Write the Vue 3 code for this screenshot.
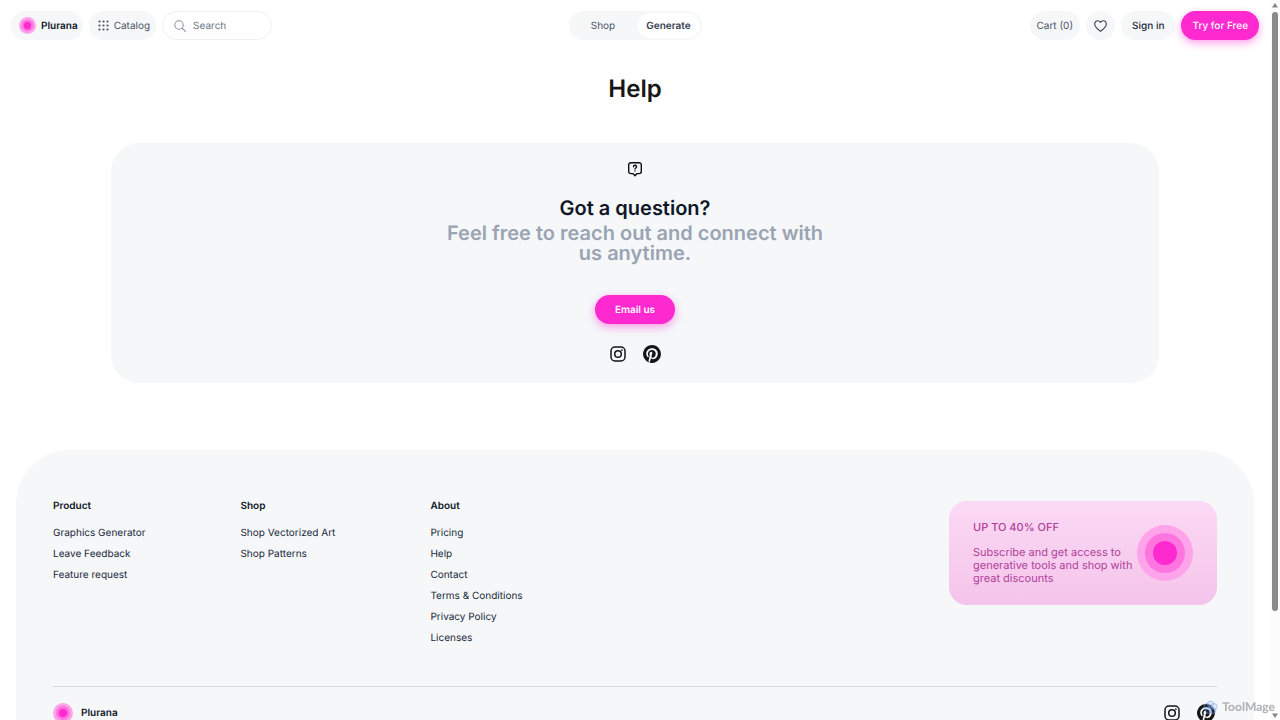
<script setup>
import { ref } from 'vue'

const query = ref('')
const mode = ref('Generate')
const modes = ['Shop', 'Generate']

const columns = [
  { title: 'Product', links: ['Graphics Generator', 'Leave Feedback', 'Feature request'] },
  { title: 'Shop', links: ['Shop Vectorized Art', 'Shop Patterns'] },
  {
    title: 'About',
    links: ['Pricing', 'Help', 'Contact', 'Terms & Conditions', 'Privacy Policy', 'Licenses']
  }
]

const pinterest =
  'M12 0a12 12 0 0 0-4.37 23.17c-.1-.95-.2-2.4.04-3.44l1.41-5.96s-.36-.72-.36-1.78c0-1.67.97-2.91 2.17-2.91 1.02 0 1.52.77 1.52 1.69 0 1.03-.66 2.57-1 4-.28 1.19.6 2.17 1.78 2.17 2.13 0 3.77-2.25 3.77-5.5 0-2.87-2.06-4.88-5.01-4.88-3.42 0-5.42 2.56-5.42 5.21 0 1.03.4 2.14.89 2.74.1.12.11.22.08.34l-.33 1.36c-.05.22-.17.27-.4.16-1.5-.7-2.43-2.88-2.43-4.64 0-3.78 2.75-7.25 7.92-7.25 4.16 0 7.39 2.96 7.39 6.92 0 4.13-2.6 7.46-6.22 7.46-1.21 0-2.35-.63-2.74-1.38l-.75 2.85c-.27 1.04-1 2.35-1.49 3.15A12 12 0 1 0 12 0z'
</script>

<template>
  <div class="shell">
    <div class="page">
      <header class="topbar">
        <div class="group">
          <a class="pill brand" href="#">
            <svg class="brand-dot" viewBox="0 0 56 56" aria-hidden="true">
              <circle cx="28" cy="28" r="28" fill="#ffa3ea" />
              <circle cx="28" cy="28" r="20" fill="#ff75df" />
              <circle cx="28" cy="28" r="12" fill="#ff29d0" />
            </svg>
            Plurana
          </a>
          <button class="pill catalog" type="button">
            <svg width="11" height="11" viewBox="0 0 11 11" fill="#4b5565" aria-hidden="true">
              <template v-for="y in 3" :key="y">
                <circle v-for="x in 3" :key="x" :cx="x * 4 - 2.5" :cy="y * 4 - 2.5" r="1.1" />
              </template>
            </svg>
            Catalog
          </button>
          <label class="search">
            <svg width="12" height="12" viewBox="0 0 12 12" fill="none" stroke="#8a93a3" stroke-width="1.1" stroke-linecap="round" aria-hidden="true">
              <circle cx="5" cy="5" r="4.2" />
              <path d="M8.1 8.1 11.3 11.3" />
            </svg>
            <input v-model="query" type="text" placeholder="Search" aria-label="Search" />
          </label>
        </div>

        <div class="switch">
          <button
            v-for="m in modes"
            :key="m"
            type="button"
            :class="['switch-item', { active: m === mode }]"
            @click="mode = m"
          >{{ m }}</button>
        </div>

        <div class="group end">
          <a class="pill cart" href="#">Cart (0)</a>
          <button class="pill heart" type="button" aria-label="Favorites">
            <svg width="13" height="12" viewBox="0 0 13 12" fill="none" stroke="#364152" stroke-width="1.1" stroke-linejoin="round" aria-hidden="true">
              <path d="M6.5 11.2C5.2 10.3.7 7.6.7 4.1.7 2.2 2.1.8 3.8.8c1.1 0 2.1.6 2.7 1.6C7.1 1.4 8.1.8 9.2.8c1.7 0 3.1 1.4 3.1 3.3 0 3.5-4.5 6.2-5.8 7.1z" />
            </svg>
          </button>
          <a class="pill signin" href="#">Sign in</a>
          <a class="pill primary" href="#">Try for Free</a>
        </div>
      </header>

      <main>
        <h1>Help</h1>
        <section class="contact">
          <svg class="question" width="14" height="15" viewBox="0 0 14 15" fill="none" stroke="#0b0f19" stroke-width="1.4" stroke-linecap="round" stroke-linejoin="round" aria-hidden="true">
            <path d="M2.7.8h8.6a2 2 0 0 1 2 2v6.8a2 2 0 0 1-2 2H9L7 13.700 5 11.600H2.700a2 2 0 0 1-2-2V2.800a2 2 0 0 1 2-2z" />
            <path d="M5.500 4.800a1.500 1.500 0 1 1 2.300 1.200c-.5.300-.8.500-.8 1M7 8.900v.1" />
          </svg>
          <h2>Got a question?</h2>
          <p>Feel free to reach out and connect with us anytime.</p>
          <a class="pill primary email" href="#">Email us</a>
          <div class="social">
            <a href="#" aria-label="Instagram">
              <svg width="16" height="16" viewBox="0 0 16 16" fill="none" stroke="#161616" stroke-width="1.5" aria-hidden="true">
                <rect x="1" y="1" width="14" height="14" rx="4" />
                <circle cx="8" cy="8" r="3.300" />
                <circle cx="11.900" cy="4.100" r=".9" fill="#161616" stroke="none" />
              </svg>
            </a>
            <a href="#" aria-label="Pinterest">
              <svg width="18" height="18" viewBox="0 0 24 24" fill="#161616" aria-hidden="true"><path :d="pinterest" /></svg>
            </a>
          </div>
        </section>
      </main>

      <footer>
        <div class="footer-top">
          <nav v-for="c in columns" :key="c.title" :aria-label="c.title">
            <h3>{{ c.title }}</h3>
            <ul>
              <li v-for="l in c.links" :key="l"><a href="#">{{ l }}</a></li>
            </ul>
          </nav>
          <aside class="promo">
            <div class="promo-text">
              <h3>UP TO 40% OFF</h3>
              <p>Subscribe and get access to generative tools and shop with great discounts</p>
            </div>
            <svg class="promo-dot" width="56" height="56" viewBox="0 0 56 56" aria-hidden="true">
              <circle cx="28" cy="28" r="28" fill="#ffa3ea" />
              <circle cx="28" cy="28" r="20" fill="#ff75df" />
              <circle cx="28" cy="28" r="12" fill="#ff29d0" />
            </svg>
          </aside>
        </div>
        <div class="footer-bottom">
          <a class="footer-brand" href="#">
            <svg width="20" height="20" viewBox="0 0 56 56" aria-hidden="true">
              <circle cx="28" cy="28" r="28" fill="#ffa3ea" />
              <circle cx="28" cy="28" r="20" fill="#ff75df" />
              <circle cx="28" cy="28" r="12" fill="#ff29d0" />
            </svg>
            Plurana
          </a>
          <div class="social">
            <a href="#" aria-label="Instagram">
              <svg width="16" height="16" viewBox="0 0 16 16" fill="none" stroke="#161616" stroke-width="1.5" aria-hidden="true">
                <rect x="1" y="1" width="14" height="14" rx="4" />
                <circle cx="8" cy="8" r="3.300" />
                <circle cx="11.900" cy="4.100" r=".9" fill="#161616" stroke="none" />
              </svg>
            </a>
            <a href="#" aria-label="Pinterest">
              <svg width="18" height="18" viewBox="0 0 24 24" fill="#161616" aria-hidden="true"><path :d="pinterest" /></svg>
            </a>
          </div>
        </div>
      </footer>
    </div>

    <div class="scrollbar" aria-hidden="true">
      <svg width="6" height="5" viewBox="0 0 6 5"><path d="M3 0 6 4.500H0z" fill="#858585" /></svg>
      <div class="track"><div class="thumb"></div></div>
      <svg width="6" height="5" viewBox="0 0 6 5"><path d="M3 5 0 .5h6z" fill="#858585" /></svg>
    </div>

    <div class="badge">
      <svg width="15" height="15" viewBox="0 0 16 15" fill="#6f9bf0" fill-opacity=".12" stroke="#7da4ee" stroke-opacity=".6" stroke-width="1" aria-hidden="true">
        <circle cx="8" cy="3.800" r="3.200" />
        <circle cx="4.200" cy="6.500" r="3.200" />
        <circle cx="11.800" cy="6.500" r="3.200" />
        <circle cx="5.600" cy="10.600" r="3.200" />
        <circle cx="10.400" cy="10.600" r="3.200" />
      </svg>
      ToolMage
    </div>
  </div>
</template>

<style>
body {
  background: #fff;
}
</style>

<style scoped>
.shell {
  --pink: #ff29d0;
  --surface: #f5f7f9;
  --ink: #101828;
  display: grid;
  grid-template-columns: minmax(0, 1fr) 10px;
  height: 100vh;
  font-family: Inter, "Liberation Sans", sans-serif;
  font-size: 10px;
  color: var(--ink);
  text-rendering: geometricPrecision;
}
.shell *,
.shell *::before {
  box-sizing: border-box;
}
.page {
  overflow-y: auto;
  scrollbar-width: none;
}
h1, h2, h3, p, ul {
  margin: 0;
  padding: 0;
}
ul {
  list-style: none;
}
a {
  color: inherit;
  text-decoration: none;
}
button,
input {
  font: inherit;
  color: inherit;
  border: 0;
  background: none;
  padding: 0;
  text-rendering: inherit;
}
svg {
  display: block;
  flex: none;
}

.topbar {
  display: grid;
  grid-template-columns: 1fr auto 1fr;
  align-items: center;
  padding: 11px;
}
.group {
  display: flex;
  align-items: center;
  gap: 6px;
}
.end {
  justify-content: flex-end;
}
.pill {
  display: inline-flex;
  align-items: center;
  justify-content: center;
  height: 29px;
  border-radius: 15px;
  background: var(--surface);
  font-weight: 500;
  white-space: nowrap;
}
.brand {
  gap: 5px;
  padding: 0 5px 0 8px;
  font-weight: 600;
}
.brand-dot {
  width: 17px;
  height: 17px;
}
.catalog {
  gap: 5px;
  padding: 0 6px 0 9px;
  font-weight: 400;
  color: #4b5565;
}
.search {
  display: flex;
  align-items: center;
  gap: 7px;
  width: 110px;
  height: 29px;
  padding: 0 11px;
  border: 1px solid #eef1f4;
  border-radius: 15px;
}
.search input {
  min-width: 0;
  flex: 1;
  outline: 0;
}
.search input::placeholder {
  color: #697586;
  opacity: 1;
}
.switch {
  display: grid;
  grid-template-columns: 65px 62px;
  gap: 2px;
  padding: 2px;
  border-radius: 15px;
  background: var(--surface);
}
.switch-item {
  height: 25px;
  border-radius: 13px;
  color: #4b5565;
}
.switch-item.active {
  background: #fff;
  color: #364152;
  font-weight: 600;
}
.cart {
  padding: 0 7px;
  font-weight: 400;
  color: #4b5565;
}
.heart {
  width: 29px;
}
.signin {
  padding: 0 11px;
  color: #202939;
}
.primary {
  padding: 0 11px;
  background: var(--pink);
  color: #fff;
  box-shadow: 0 3px 8px rgba(255, 41, 208, 0.45);
}

main {
  display: flex;
  flex-direction: column;
  align-items: center;
  padding: 23px 40px 67px;
}
h1 {
  font-size: 24px;
  line-height: 30px;
  font-weight: 600;
  color: #161616;
}
.contact {
  display: flex;
  flex-direction: column;
  align-items: center;
  width: 100%;
  max-width: 1048px;
  margin-top: 39px;
  padding: 19px 24px 20px;
  border-radius: 28px;
  background: var(--surface);
  text-align: center;
}
h2 {
  margin-top: 21px;
  font-size: 20px;
  line-height: 20px;
  font-weight: 600;
}
.contact p {
  max-width: 400px;
  margin-top: 5px;
  font-size: 20px;
  line-height: 20px;
  font-weight: 600;
  color: #9aa4b2;
}
.email {
  width: 80px;
  margin-top: 32px;
  font-weight: 600;
}
.social {
  display: flex;
  align-items: center;
  gap: 17px;
}
.contact .social {
  margin-top: 21px;
}

footer {
  margin: 0 16px;
  padding: 51px 37px 24px;
  border-radius: 54px 54px 0 0;
  background: var(--surface);
}
.footer-top {
  display: flex;
  align-items: flex-start;
  gap: 95px;
}
h3 {
  font-size: 10px;
  line-height: 11px;
  font-weight: 600;
}
nav ul {
  display: grid;
  gap: 8px;
  margin-top: 15px;
  line-height: 13px;
  color: #202939;
}
.promo {
  display: flex;
  align-items: center;
  width: 268px;
  height: 104px;
  margin-left: auto;
  padding: 0 24px;
  border-radius: 18px;
  background: linear-gradient(#fbd9f4, #f5c4eb);
  color: #b0419a;
}
.promo-text {
  flex: 1;
}
.promo h3,
.promo p {
  font-size: 11px;
  line-height: 13px;
}
.promo h3 {
  font-weight: 500;
}
.promo p {
  margin-top: 12px;
}
.footer-bottom {
  display: flex;
  align-items: center;
  justify-content: space-between;
  margin-top: 41px;
  padding: 16px 2px 0 0;
  border-top: 1px solid #d5dae1;
}
.footer-brand {
  display: flex;
  align-items: center;
  gap: 8px;
  font-weight: 600;
}

.scrollbar {
  display: flex;
  flex-direction: column;
  align-items: center;
  gap: 4px;
  padding: 3px 0 2px;
  background: #fcfcfc;
}
.track {
  flex: 1;
  width: 6px;
}
.thumb {
  height: 86%;
  border-radius: 3px;
  background: #8a8a8a;
}
.badge {
  position: fixed;
  right: 5px;
  bottom: 5px;
  display: flex;
  align-items: center;
  gap: 4px;
  font-family: Lato, sans-serif;
  font-size: 12px;
  line-height: 16px;
  font-weight: 900;
  color: #b4b5b8;
}
</style>
